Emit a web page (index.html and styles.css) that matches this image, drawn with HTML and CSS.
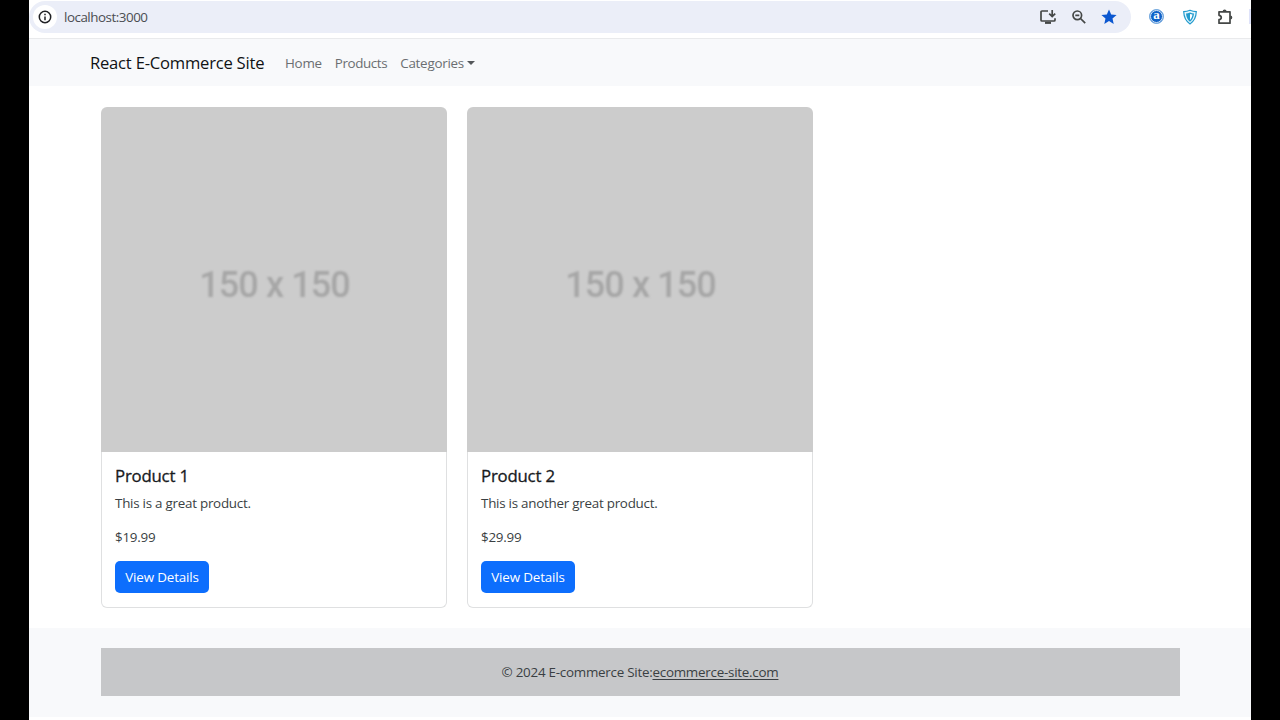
FILE: index.html
```html
<!DOCTYPE html>
<html lang="en">
<head>
<meta charset="utf-8">
<title>React E-Commerce Site</title>
<link rel="stylesheet" href="styles.css">
</head>
<body>
<div class="window">
  <div class="toolbar">
    <div class="omnibox">
      <span class="info">
        <svg width="14" height="14" viewBox="0 0 14 14" fill="none" stroke="#202124" stroke-width="1.5"><circle cx="7" cy="7" r="5.7"/><path d="M7 6.4v3.8M7 3.8v1.5"/></svg>
      </span>
      <span class="url">localhost:3000</span>
      <svg class="install" width="18" height="16" viewBox="0 0 18 16" fill="none" stroke="#444746" stroke-width="1.7"><path d="M9 2H3Q2 2 2 3v8q0 1 1 1h12q1 0 1-1V9.300"/><path d="M13.200 1v6M10.200 4.600l3 3 3-3"/><path d="M6 13.800h6" stroke-width="2.200"/></svg>
      <svg class="lens" width="16" height="16" viewBox="0 0 16 16" fill="none" stroke="#444746" stroke-width="1.700"><circle cx="6.300" cy="6.300" r="4.300"/><path d="M9.500 9.500l4.700 4.700M4.300 6.300h4"/></svg>
      <svg class="star" width="16" height="16" viewBox="0 0 16 16" fill="#0b57d0"><path d="M8 .6l2.200 4.900 5.400.5-4.100 3.600 1.200 5.300L8 12.100l-4.700 2.800 1.200-5.300L.4 6l5.400-.5z"/></svg>
    </div>
    <span class="ext-a"><span class="ext-letter">a</span></span>
    <svg class="shield" width="16" height="16" viewBox="0 0 16 16" fill="none"><path d="M8 1.200C5.500 2.200 3.500 2.500 1.700 2.600 1.900 8.500 4 12.400 8 14.900c4-2.500 6.100-6.400 6.300-12.300C12.500 2.500 10.500 2.200 8 1.200z" fill="#e6f7fd" stroke="#229bce" stroke-width="1.200"/><path d="M8 3.600c-1.500.6-2.700.8-4 .9C4.200 8.200 5.600 10.900 8 12.700c2.400-1.800 3.800-4.500 4-8.200-1.300-.1-2.500-.3-4-.9z" fill="#229bce"/><path d="M8 5v6c1.500-1.500 2.200-3.200 2.500-5.400C9.500 5.500 8.800 5.300 8 5z" fill="#fff"/></svg>
    <svg class="puzzle" width="18" height="18" viewBox="0 0 18 18" fill="none"><path d="M3 3.800h11v11.400H3v-3.500c3-.4 3-4 0-4.400z" stroke="#444746" stroke-width="1.700" stroke-linejoin="round"/><path d="M6.600 3.500a2 2 0 0 1 4 0zM14.300 7.600a2 2 0 0 1 0 4z" fill="#444746"/></svg>
    <span class="divider"></span>
  </div>
  <nav class="navbar">
    <a class="brand">React E-Commerce Site</a>
    <a class="nav-link">Home</a>
    <a class="nav-link products-link">Products</a>
    <a class="nav-link categories-link">Categories</a>
    <span class="caret"></span>
  </nav>
  <main class="products">
    <article class="card">
      <div class="thumb"><span class="size">150 x 150</span></div>
      <div class="card-body">
        <h5 class="title">Product 1</h5>
        <p class="text">This is a great product.</p>
        <p class="text">$19.99</p>
        <a class="button">View Details</a>
      </div>
    </article>
    <article class="card">
      <div class="thumb"><span class="size">150 x 150</span></div>
      <div class="card-body">
        <h5 class="title">Product 2</h5>
        <p class="text">This is another great product.</p>
        <p class="text">$29.99</p>
        <a class="button">View Details</a>
      </div>
    </article>
  </main>
  <footer class="footer">
    <div class="copyright"><span>© 2024 E-commerce Site:<a class="site-link">ecommerce-site.com</a></span></div>
  </footer>
</div>
</body>
</html>
```
FILE: styles.css
```css
* { box-sizing: border-box; }
body { margin: 0; height: 720px; overflow: hidden; background: #000; font-family: "Open Sans", "Noto Sans", sans-serif; font-size: 13.4px; line-height: 20px; letter-spacing: -0.25px; color: #3a3f43; }
svg { display: block; flex: none; }
.window { width: 1222px; height: 720px; margin-left: 29px; background: #fff; overflow: hidden; }
.toolbar { display: flex; align-items: center; height: 39px; padding-bottom: 5px; border-bottom: 1px solid #e9eaec; }
.omnibox { display: flex; align-items: center; width: 1102px; height: 32px; margin-top: 1px; padding-left: 4px; border-radius: 16px; background: #ebeef8; }
.info { display: flex; align-items: center; justify-content: center; width: 24px; height: 24px; border-radius: 50%; background: #fff; }
.url { margin-left: 7px; letter-spacing: -0.48px; color: #4a4d51; }
.install { margin-left: auto; }
.lens { margin-left: 14px; }
.star { margin: 0 14px 0 14px; }
.ext-a { display: flex; justify-content: center; width: 15px; height: 15px; margin-left: 18px; border: 1px solid #78acdf; outline: 1px solid #d7e7f7; outline-offset: -2px; border-radius: 50%; background: #0f62c8; color: #fff; }
.ext-letter { font: bold 13px/10px "Liberation Serif", serif; letter-spacing: 0; }
.shield { margin-left: 18px; }
.puzzle { margin-left: 18px; }
.divider { width: 2px; height: 15px; margin-left: auto; background: #dfe3fa; }
.navbar { display: flex; align-items: center; height: 47px; padding-left: 61px; background: #f8f9fb; }
.brand { width: 195px; font-size: 16.6px; letter-spacing: -0.22px; color: #101214; white-space: nowrap; }
.nav-link { margin-right: 13px; color: #6b6e71; }
.products-link { letter-spacing: -0.400px; }
.categories-link { margin-right: 3px; }
.caret { border: 4px solid transparent; border-top-color: #55585b; border-bottom: 0; }
.products { display: flex; gap: 20px; padding: 21px 0 20px 72px; }
.card { width: 346px; height: 501px; }
.thumb { display: flex; align-items: center; justify-content: center; height: 345px; padding-top: 10px; padding-left: 1px; border-radius: 6px 6px 0 0; background: #ccc; }
.size { font: 500 36px/40px Roboto, "Liberation Sans", sans-serif; letter-spacing: -0.900px; color: #a6a6a6; filter: blur(0.800px); }
.card-body { height: 156px; padding: 14px 13px; border: 1px solid #dfe0e1; border-top: 0; border-radius: 0 0 6px 6px; }
.title { margin: 0 0 7px; font-size: 16.800px; line-height: 20px; letter-spacing: -0.200px; font-weight: 500; color: #171a1d; -webkit-text-stroke: 0.300px #171a1d; }
.text { margin: 0 0 14px; }
.button { display: inline-flex; align-items: center; justify-content: center; width: 94px; height: 32px; border-radius: 5px; background: #0d6efd; color: #fff; letter-spacing: -0.150px; }
.footer { height: 88.500px; padding: 20px 71.500px; background: #f8f9fb; }
.copyright { display: flex; align-items: center; justify-content: center; height: 48px; background: #c6c7c9; }
.site-link { text-decoration: underline; text-underline-offset: 2px; }
```
